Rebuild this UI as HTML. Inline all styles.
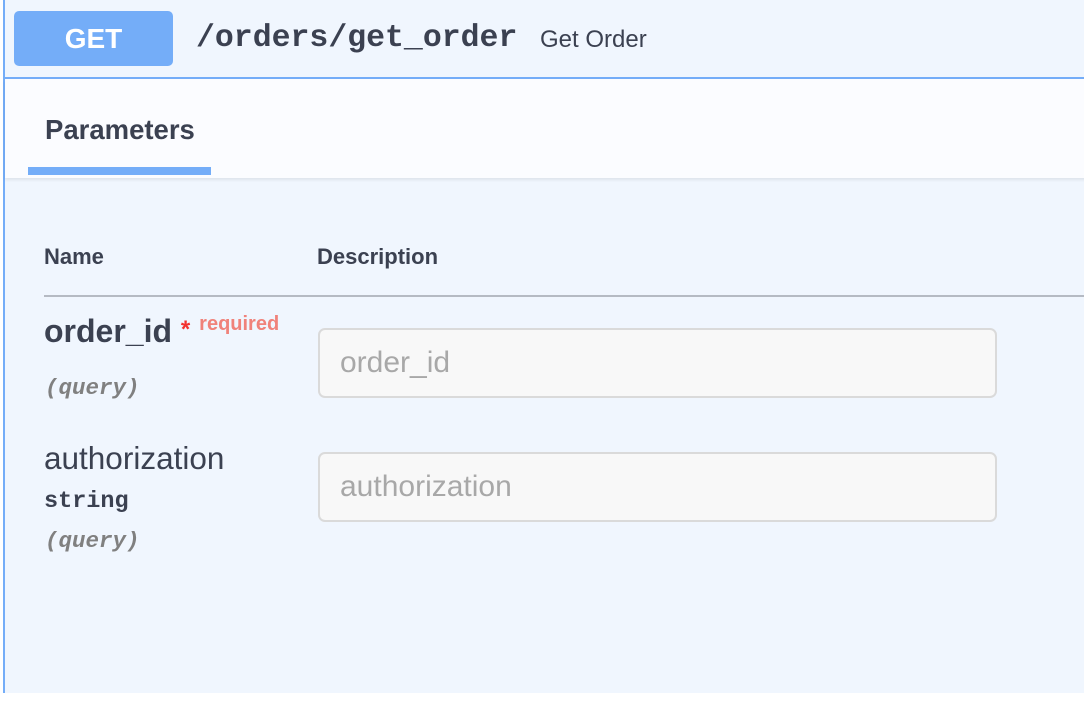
<!DOCTYPE html>
<html><head><style>
*{margin:0;padding:0;box-sizing:border-box}
body{width:1084px;height:702px;background:#fff;position:relative;overflow:hidden;font-family:"Liberation Sans",sans-serif;color:#3b4151}
.box{position:absolute;left:3px;top:0;width:1100px;height:693px;border-left:2px solid #74adf8;border-top:2px solid #74adf8;background:#f0f6fe}
.in{position:absolute;left:-5px;top:-2px;width:1100px;height:693px}
.hdr{position:absolute;left:5px;top:0;width:100%;height:79px;border-bottom:2px solid #74adf8;background:#f0f6fe}
.get{position:absolute;left:9px;top:11px;width:159px;height:55px;background:#74adf8;border-radius:5px;color:#fff;font-weight:bold;font-size:28px;text-align:center;line-height:55px}
.path{position:absolute;left:191px;top:21px;font-family:"Liberation Mono",monospace;font-weight:bold;font-size:31.5px;line-height:36px}
.sum{position:absolute;left:535px;top:25px;font-size:24px;line-height:30px}
.tabs{position:absolute;left:5px;top:79px;width:100%;height:99px;background:#fbfcff;box-shadow:0 2px 3px rgba(0,0,0,.08)}
.tab{position:absolute;left:40px;top:35px;font-size:27.5px;font-weight:bold}
.ul{position:absolute;left:23px;top:88px;width:183px;height:8px;background:#74adf8}
.t{position:absolute;white-space:nowrap}
.mono{font-family:"Liberation Mono",monospace;font-weight:bold}
.inp{position:absolute;left:318px;width:679px;height:70px;background:#f8f8f8;border:2px solid #dadada;border-radius:7px;font-size:30px;color:#a8a8a8;padding-left:20px;line-height:66px}
</style></head><body>
<div class="box"><div class="in">
<div class="hdr">
<div class="get">GET</div>
<div class="path">/orders/get_order</div>
<div class="sum">Get Order</div>
</div>
<div class="tabs"><div class="tab">Parameters</div><div class="ul"></div></div>
<div class="t" style="left:44px;top:244px;font-size:22px;font-weight:bold">Name</div>
<div class="t" style="left:317px;top:244px;font-size:22px;font-weight:bold">Description</div>
<div style="position:absolute;left:44px;top:295px;width:1100px;height:2px;background:#b5bac3"></div>
<div class="t" style="left:44px;top:313px;font-size:32px;font-weight:bold">order_id <span style="color:#f3312e;font-size:24px;position:relative;top:-5px">*</span> <span style="color:#f0827a;font-size:20px;position:relative;top:-12px">required</span></div>
<div class="t mono" style="left:45px;top:375px;font-size:22.5px;font-style:italic;color:#808080">(query)</div>
<div class="inp" style="top:328px">order_id</div>
<div class="t" style="left:44px;top:440px;font-size:31.5px">authorization</div>
<div class="t mono" style="left:44px;top:488px;font-size:23.5px">string</div>
<div class="t mono" style="left:45px;top:528px;font-size:22.5px;font-style:italic;color:#808080">(query)</div>
<div class="inp" style="top:452px">authorization</div>
</div></div>
</body></html>
